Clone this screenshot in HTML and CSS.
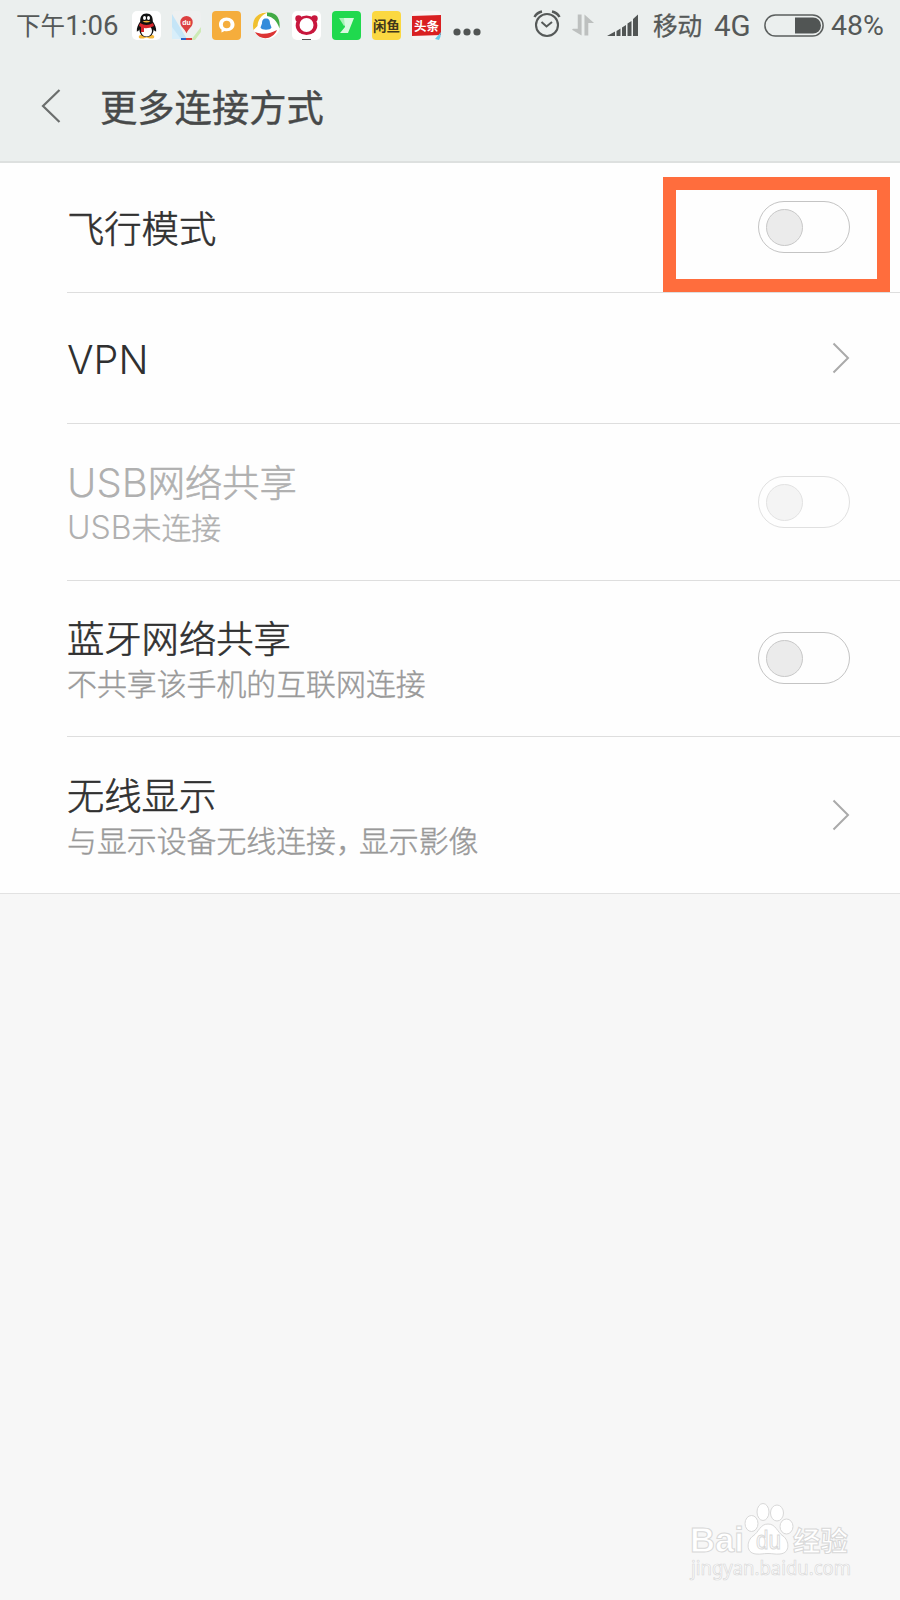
FILE: index.html
```html
<!DOCTYPE html>
<html lang="zh-CN">
<head>
<meta charset="utf-8">
<title>更多连接方式</title>
<link rel="stylesheet" href="styles.css">
</head>
<body>
<div class="statusbar">
  <div class="clock"><span class="cjk">下午</span><span class="num time">1:06</span></div>
  <div class="apps">
    <svg class="app" viewBox="0 0 29 29"><rect width="29" height="29" rx="5" fill="#fff"/><path d="M8 24q-2 1-1 3 3 1 6 0 2-1 3 0 3 1 6 0 1-2-1-3z" fill="#f6b93b"/><path d="M14.5 2.500c-4.500 0-6.500 3-6.300 8-2 3-3.700 6-3.400 10 1 0 2-1 2.500-2 .5 5 3 7.500 7.200 7.500s6.700-2.500 7.200-7.500c.5 1 1.500 2 2.500 2 .3-4-1.400-7-3.400-10 .2-5-1.800-8-6.300-8z" fill="#111"/><ellipse cx="14.500" cy="20" rx="5.500" ry="5.500" fill="#fff"/><path d="M8 12q6.500 4 13 0l1 3q-6 3-10 2v4H9v-5l-2-1z" fill="#d8272d"/><ellipse cx="12.500" cy="7" rx="1.500" ry="2" fill="#fff"/><ellipse cx="16.500" cy="7" rx="1.500" ry="2" fill="#fff"/><path d="M10.500 10.500q4-1.500 8 0-4 2-8 0z" fill="#f6b93b"/></svg>
    <svg class="app" viewBox="0 0 29 29"><rect width="29" height="29" rx="4" fill="#eef0f0"/><path d="M0 3l15 25H0z" fill="#c5e5f7"/><path d="M0 16l9 12H0z" fill="#d8eefa"/><path d="M29 16v5l-6 8h-4z" fill="#cdeab5"/><path d="M9 27h5v2H9z" fill="#2d64c8"/><path d="M14 27h6v2h-6z" fill="#d93b3b"/><path d="M14.500 5a6.200 6.200 0 0 0-6.200 6.200c0 4.500 4 6 6.200 11 2.200-5 6.200-6.500 6.200-11A6.200 6.200 0 0 0 14.500 5z" fill="#dc3f40"/><text class="pin" x="14.500" y="14" text-anchor="middle">du</text></svg>
    <svg class="app" viewBox="0 0 29 29"><rect width="29" height="29" rx="4" fill="#f5ad3c"/><path d="M14.500 6.500c-4.500 0-7.500 3-7.500 7 0 2.500 1 4 2.500 5v3l3-1.500c6 1 10-2 10-6.500 0-4-3.500-7-8-7z" fill="#fff"/><circle cx="14.700" cy="13.500" r="3.800" fill="#f5ad3c"/></svg>
    <svg class="app" viewBox="0 0 29 29"><circle cx="14.500" cy="14.500" r="13.500" fill="#fff"/><path d="M1.500 19C-1 8 6 1 16 1.500 9 4 6 9 5.500 15z" fill="#f0c030"/><path d="M15 1.500c9-1 14 6 12.500 16C25 10 21 6 15 5z" fill="#42ab45"/><path d="M3 21c7 3 15 2 22-2-4 10-17 11-22 2z" fill="#dc3434"/><path d="M14 7.500c-3 0-4 2-4 5l-1.500 4c1 3 10 3 11 0l-1.500-4c0-3-1-5-4-5z" fill="#348cdb"/></svg>
    <svg class="app" viewBox="0 0 29 29"><rect width="29" height="29" rx="5" fill="#fff"/><circle cx="6.500" cy="7.500" r="3.200" fill="#c8173d"/><circle cx="22.500" cy="7.500" r="3.200" fill="#c8173d"/><ellipse cx="14.500" cy="14.300" rx="10.800" ry="9.800" fill="#c8173d"/><circle cx="14.500" cy="14" r="7" fill="#fff"/><path d="M10 28h9v1h-9z" fill="#555"/></svg>
    <svg class="app" viewBox="0 0 29 29"><rect width="29" height="29" rx="4" fill="#20d94e"/><path d="M7 7h7l2 5-4 3z" fill="#a5f2b5"/><path d="M12 7h10l-6 15H8l5-6z" fill="#d9f9e0"/></svg>
    <svg class="app" viewBox="0 0 29 29"><rect width="29" height="29" rx="4" fill="#fbd841"/><text class="fish" x="14.500" y="19.500" text-anchor="middle">闲鱼</text></svg>
    <svg class="app" viewBox="0 0 29 29"><rect width="29" height="29" rx="4" fill="#f7f3f3"/><path d="M0 5l29-1v20L0 25z" fill="#d91f21"/><text class="news" x="14.500" y="19.500" text-anchor="middle">头条</text><path d="M29 21l-6 7 4 1q2-3 2-8z" fill="#65cbea"/></svg>
  </div>
  <svg class="more" viewBox="0 0 28 8"><circle cx="4" cy="4" r="3.600"/><circle cx="14" cy="4" r="3.600"/><circle cx="24" cy="4" r="3.600"/></svg>
  <div class="signals">
    <svg class="alarm" viewBox="0 0 28 28"><g fill="none" stroke="#555958" stroke-width="2.100"><circle cx="14" cy="15" r="11"/><path d="M8.500 12l5 4.500 5.500-4.500" stroke-width="2"/><path d="M1.500 7Q4 2.500 9 1.500M26.500 7Q24 2.500 19 1.500" stroke-width="2.500"/></g></svg>
    <svg class="data" viewBox="0 0 24 23"><path d="M10 0v22L0 16l1-1h5V0zM13 22V0l10 9h-6v13z" fill="#bdc0bf"/></svg>
    <svg class="bars" viewBox="0 0 32 22"><path d="M0 22l8-4.500V22zM9.500 17l4-2.500V22h-4zM15 13.500l4-2.500v11h-4zM20.500 9.500l4-2.500v15h-4zM26 5l5-4.500V22h-5z" fill="#515554"/></svg>
    <span class="cjk carrier">移动</span>
    <span class="num net">4G</span>
    <svg class="battery" viewBox="0 0 60 23"><rect x=".9" y=".9" width="58.200" height="21.200" rx="10.600" fill="none" stroke="#5b5f5e" stroke-width="1.500"/><path d="M31 3.500h18a8 8 0 0 1 0 16H31z" fill="#515554"/></svg>
    <span class="num pct">48%</span>
  </div>
</div>
<header class="header">
  <svg class="back" viewBox="0 0 20 36"><path d="M18.500 2L2 18l16.500 16" fill="none" stroke="#6b6e6d" stroke-width="2.200"/></svg>
  <h1 class="heading">更多连接方式</h1>
</header>
<main class="list">
  <section class="row first">
    <div class="label"><div class="title">飞行模式</div></div>
    <div class="toggle marked"><i class="knob"></i></div>
  </section>
  <section class="row">
    <div class="label"><div class="title latin">VPN</div></div>
    <svg class="arrow" viewBox="0 0 18 32"><path d="M1.500 1.500L16 16 1.500 30.500"/></svg>
  </section>
  <section class="row tall disabled">
    <div class="label"><div class="title"><span class="latin">USB</span>网络共享</div><div class="sub"><span class="latin">USB</span>未连接</div></div>
    <div class="toggle"><i class="knob"></i></div>
  </section>
  <section class="row tall">
    <div class="label"><div class="title">蓝牙网络共享</div><div class="sub">不共享该手机的互联网连接</div></div>
    <div class="toggle"><i class="knob"></i></div>
  </section>
  <section class="row tall">
    <div class="label"><div class="title">无线显示</div><div class="sub">与显示设备无线连接<span class="comma">，</span>显示影像</div></div>
    <svg class="arrow" viewBox="0 0 18 32"><path d="M1.500 1.500L16 16 1.500 30.500"/></svg>
  </section>
</main>
<footer class="footer">
  <svg class="watermark" viewBox="0 0 170 84">
    <g class="mark">
      <text class="bai" x="5" y="50" textLength="54" lengthAdjust="spacingAndGlyphs">Bai</text>
      <ellipse cx="66.500" cy="21.500" rx="6.500" ry="8"/><ellipse cx="78" cy="10" rx="6" ry="8.500"/><ellipse cx="92" cy="11" rx="6.500" ry="8"/><ellipse cx="101.500" cy="24.500" rx="6.500" ry="7.500"/>
      <path d="M83 22c8 0 9 8 15 12 6 4 8 17-3 18-5 .5-7-.5-12-.5s-7 1-12 .5c-11-1-9-14-3-18 6-4 7-12 15-12z"/>
      <text class="du" x="71" y="47" textLength="25" lengthAdjust="spacingAndGlyphs">du</text>
      <text class="exp" x="108" y="49" textLength="55" lengthAdjust="spacingAndGlyphs">经验</text>
      <text class="url" x="6" y="73" textLength="160" lengthAdjust="spacingAndGlyphs">jingyan.baidu.com</text>
    </g>
  </svg>
</footer>
</body>
</html>
```
FILE: styles.css
```css
*, *::after { box-sizing: border-box; }
body {
  margin: 0;
  width: 900px;
  height: 1600px;
  overflow: hidden;
  display: flex;
  flex-direction: column;
  background: #f7f7f7;
  font-family: "Noto Sans CJK SC", sans-serif;
}
svg { display: block; flex: none; }

.statusbar {
  display: flex;
  height: 52px;
  padding-left: 16px;
  background: #ebefee;
  color: #555958;
  line-height: 52px;
  white-space: nowrap;
}
.clock { display: flex; width: 116px; flex: none; }
.cjk { font-size: 24.600px; line-height: 49px; }
.num { font-family: Roboto, sans-serif; font-size: 28.500px; }
.time { font-size: 27.600px; }
.apps { display: flex; gap: 11px; padding-top: 11px; }
.app { width: 29px; height: 29px; }
.pin { font: bold 7px "Liberation Sans", sans-serif; fill: #fff; }
.news { font: bold 12.500px "Noto Sans CJK SC", sans-serif; fill: #fff; }
.fish { font: bold 13.500px "Noto Sans CJK SC", sans-serif; fill: #40371b; }
.more { width: 28px; height: 8px; margin: 28px 0 0 12px; fill: #515554; }
.signals { display: flex; margin-left: 52px; }
.alarm { width: 28px; height: 28px; margin-top: 10px; }
.data { width: 23px; height: 23px; margin: 14px 0 0 11px; }
.bars { width: 32px; height: 22px; margin: 14px 0 0 12px; }
.carrier { margin-left: 14px; width: 50px; -webkit-text-stroke: .3px; }
.net { margin-left: 11px; width: 40px; font-size: 29.500px; }
.battery { width: 60px; height: 23px; margin: 14px 0 0 10px; }
.pct { margin-left: 7px; }

.header {
  display: flex;
  height: 111px;
  padding-left: 41px;
  background: #ebefee;
  border-bottom: 2px solid #dde0df;
}
.back { width: 20px; height: 36px; margin-top: 36px; }
.heading {
  margin: 0 0 0 39px;
  color: #474949;
  font-size: 37.300px;
  font-weight: 400;
  -webkit-text-stroke: .4px;
  line-height: 109px;
}

.list { background: #fefefe; border-bottom: 1px solid #e2e2e2; }
.row {
  display: flex;
  align-items: center;
  justify-content: space-between;
  height: 131px;
  margin-left: 67px;
  padding-right: 50px;
  border-bottom: 1px solid #dedede;
}
.first { height: 130px; }
.tall { height: 156.500px; }
.row:last-child { border-bottom: 0; height: 156px; }
.title { color: #303030; font-size: 37.300px; font-weight: 300; line-height: 47px; -webkit-text-stroke: .6px; }
.sub { color: #999; font-size: 29.900px; font-weight: 300; line-height: 42px; -webkit-text-stroke: .4px; }
.latin { font-family: Inter, sans-serif; font-weight: 300; -webkit-text-stroke: 0; }
.title.latin { font-size: 39.500px; padding-top: 4px; }
.title .latin { font-size: 40px; line-height: 40px; }
.sub .latin { font-size: 32px; line-height: 32px; }
.comma { letter-spacing: -7px; }
.disabled .label { padding-top: 2px; }
.disabled .title, .disabled .sub { color: #b0b0b0; }
.disabled .toggle { opacity: .5; }

.toggle {
  position: relative;
  width: 92px;
  height: 52px;
  padding: 7px;
  border: 1px solid #c4c4c4;
  border-radius: 26px;
}
.knob {
  display: block;
  width: 37px;
  height: 37px;
  border: 1px solid #c8c8c8;
  border-radius: 50%;
  background: #ebebeb;
}
.first .toggle { margin-bottom: 1px; }
.marked::after {
  content: "";
  position: absolute;
  left: -96px;
  top: -25px;
  width: 227px;
  height: 115px;
  border: 13px solid #ff6d3d;
}
.arrow { width: 18px; height: 32px; fill: none; stroke: #aaa; stroke-width: 2px; }

.footer { margin-top: auto; padding: 0 45px 14px 0; display: flex; justify-content: flex-end; }
.watermark { width: 170px; height: 84px; }
.mark { fill: #fff; stroke: #d8d8d8; stroke-width: 1px; }
.bai { font: bold 35px "Liberation Sans", sans-serif; }
.du { font: 26px "Liberation Sans", sans-serif; }
.exp { font: bold 27px "Noto Sans CJK SC", sans-serif; }
.url { font: 19px "Noto Sans", sans-serif; stroke-width: .7px; }
```
